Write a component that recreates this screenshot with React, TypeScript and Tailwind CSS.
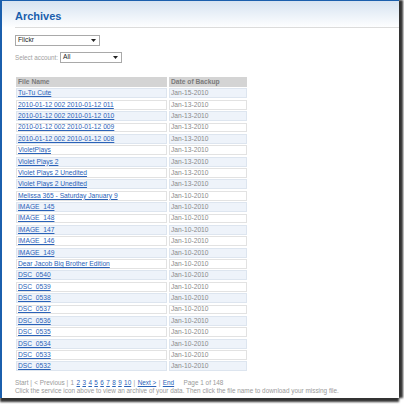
const rows: [string, string][] = [
  ["Tu-Tu Cute", "Jan-15-2010"],
  ["2010-01-12 002 2010-01-12 011", "Jan-13-2010"],
  ["2010-01-12 002 2010-01-12 010", "Jan-13-2010"],
  ["2010-01-12 002 2010-01-12 009", "Jan-13-2010"],
  ["2010-01-12 002 2010-01-12 008", "Jan-13-2010"],
  ["VioletPlays", "Jan-13-2010"],
  ["Violet Plays 2", "Jan-13-2010"],
  ["Violet Plays 2 Unedited", "Jan-13-2010"],
  ["Violet Plays 2 Unedited", "Jan-13-2010"],
  ["Melissa 365 - Saturday January 9", "Jan-10-2010"],
  ["IMAGE_145", "Jan-10-2010"],
  ["IMAGE_148", "Jan-10-2010"],
  ["IMAGE_147", "Jan-10-2010"],
  ["IMAGE_146", "Jan-10-2010"],
  ["IMAGE_149", "Jan-10-2010"],
  ["Dear Jacob Big Brother Edition", "Jan-10-2010"],
  ["DSC_0540", "Jan-10-2010"],
  ["DSC_0539", "Jan-10-2010"],
  ["DSC_0538", "Jan-10-2010"],
  ["DSC_0537", "Jan-10-2010"],
  ["DSC_0536", "Jan-10-2010"],
  ["DSC_0535", "Jan-10-2010"],
  ["DSC_0534", "Jan-10-2010"],
  ["DSC_0533", "Jan-10-2010"],
  ["DSC_0532", "Jan-10-2010"],
];

function Select({ value, width }: { value: string; width: string }) {
  return (
    <div
      className={`${width} h-[11px] border border-[#a9a9a9] bg-white flex items-center justify-between pl-[2px] pr-[3px]`}
    >
      <span className="text-[6.7px] leading-none text-[#222]">{value}</span>
      <svg width="5" height="3" viewBox="0 0 5 3">
        <path d="M0 0h5L2.5 3z" fill="#222" />
      </svg>
    </div>
  );
}

export default function App() {
  const pages = ["2", "3", "4", "5", "6", "7", "8", "9", "10"];

  return (
    <div className="w-[404px] h-[404px] bg-white overflow-hidden font-['Liberation_Sans',Arial,sans-serif]">
      <div className="w-[399px] h-[398px] bg-white border-l-2 border-t border-[#1b5fad] shadow-[4px_0_2px_#333,0_4px_2px_#333] flex flex-col">
        {/* header */}
        <div className="bg-linear-to-b from-[#d6e3f1] to-white pl-[13px]">
          <div className="pt-[9px] pb-[4px] border-b border-[#dcdcdc]">
            <h1 className="text-[11px] leading-[13px] font-bold text-[#1b5fad]">Archives</h1>
          </div>
        </div>

        <div className="pl-[13px] pt-[7px]">
          <Select value="Flickr" width="w-[85px]" />

          <div className="flex items-center gap-[2px] mt-[6px]">
            <span className="text-[6.3px] text-[#a0a0a0]">Select account:</span>
            <Select value="All" width="w-[62px]" />
          </div>

          {/* archive table */}
          <div className="grid grid-cols-[151px_78px] gap-x-[2px] gap-y-[1.5px] mt-[14px] ml-[1px] text-[6.7px]">
            <div className="h-[9.875px] bg-[#d4d4d4] pl-[2px] flex items-center font-bold text-[#7b7b7b]">
              File Name
            </div>
            <div className="h-[9.875px] bg-[#d4d4d4] pl-[2px] flex items-center font-bold text-[#7b7b7b]">
              Date of Backup
            </div>
            {rows.map(([name, date], idx) => {
              const tint =
                idx % 2 === 0
                  ? "bg-[#eef3fa] border-[#dde5ef]"
                  : "bg-white border-[#e2e2e2]";
              return [
                <div
                  key={`n${idx}`}
                  className={`h-[9.875px] border ${tint} pl-[1px] flex items-center`}
                >
                  <span className="text-[#2a62b8] underline">{name}</span>
                </div>,
                <div
                  key={`d${idx}`}
                  className={`h-[9.875px] border ${tint} pl-[1px] flex items-center text-[#8a8a8a]`}
                >
                  {date}
                </div>,
              ];
            })}
          </div>

          {/* pager */}
          <div className="mt-[8px] text-[6.4px] leading-[8px] text-[#9a9a9a]">
            <div className="flex gap-[2.4px] items-center">
              <span>Start |</span>
              <span>&lt; Previous |</span>
              <span>1</span>
              {pages.map((p) => (
                <span key={p} className="text-[#2a62b8] underline">
                  {p}
                </span>
              ))}
              <span>|</span>
              <span className="text-[#2a62b8] underline">Next &gt;</span>
              <span>|</span>
              <span className="text-[#2a62b8] underline">End</span>
              <span className="ml-[7px]">Page 1 of 148</span>
            </div>
            <div>
              Click the service icon above to view an archive of your data. Then click the file name to download your missing file.
            </div>
          </div>
        </div>
      </div>
    </div>
  );
}
